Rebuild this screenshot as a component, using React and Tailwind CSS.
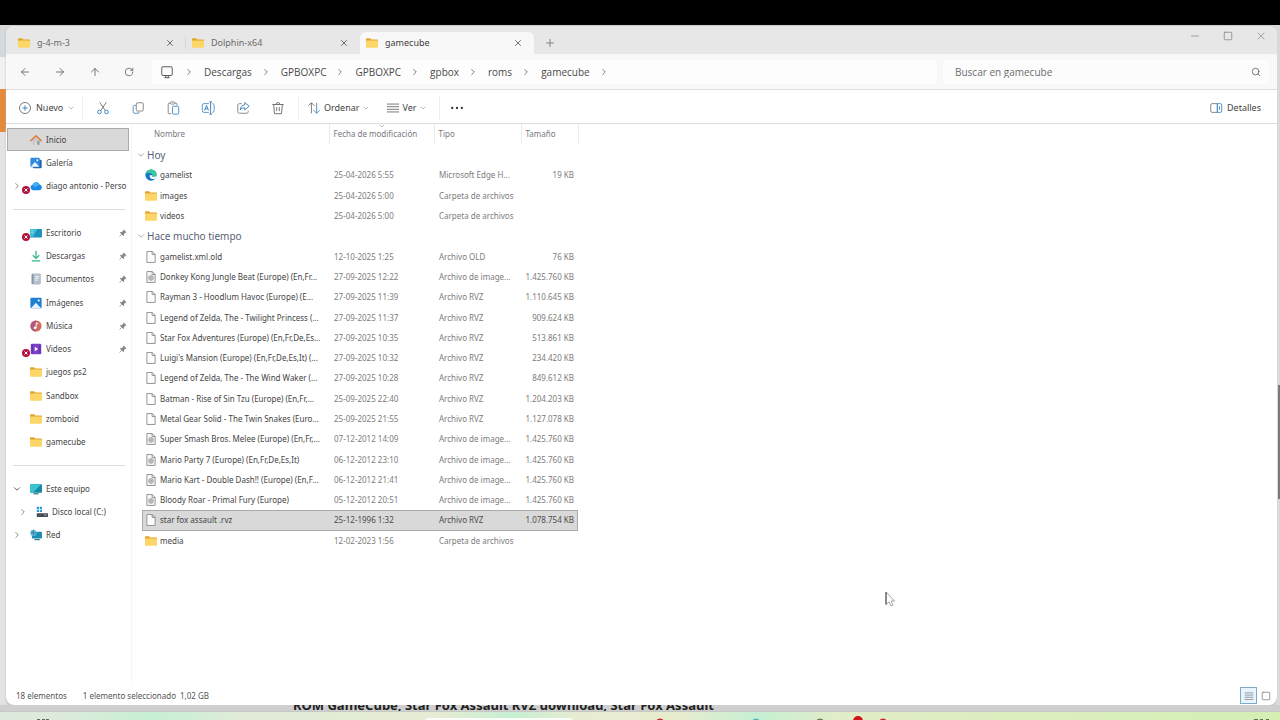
import { useState } from "react";
import clsx from "clsx";
import {
  ArrowLeft,
  ArrowRight,
  ArrowUp,
  ChevronDown,
  ChevronRight,
  Minus,
  Plus,
  RotateCw,
  Search,
  Square,
  X,
} from "lucide-react";

const tabs = [
  { id: "g4m3", label: "g-4-m-3" },
  { id: "dolphin", label: "Dolphin-x64" },
  { id: "gamecube", label: "gamecube" },
];

const crumbs = ["Descargas", "GPBOXPC", "GPBOXPC", "gpbox", "roms", "gamecube"];

const sidebarItems = [
  { id: "inicio", label: "Inicio", icon: "home" },
  { id: "galeria", label: "Galería", icon: "gallery" },
  { id: "onedrive", label: "diago antonio - Perso", icon: "cloud", expand: "right", error: true },
  { id: "sep1", separator: true },
  { id: "escritorio", label: "Escritorio", icon: "desktop", pinned: true, error: true },
  { id: "descargas", label: "Descargas", icon: "download", pinned: true },
  { id: "documentos", label: "Documentos", icon: "document", pinned: true },
  { id: "imagenes", label: "Imágenes", icon: "picture", pinned: true },
  { id: "musica", label: "Música", icon: "music", pinned: true },
  { id: "videos", label: "Videos", icon: "video", pinned: true, error: true },
  { id: "ps2", label: "juegos ps2", icon: "folder" },
  { id: "sandbox", label: "Sandbox", icon: "folder" },
  { id: "zomboid", label: "zomboid", icon: "folder" },
  { id: "gc", label: "gamecube", icon: "folder" },
  { id: "sep2", separator: true },
  { id: "equipo", label: "Este equipo", icon: "monitor", expand: "down" },
  { id: "disco", label: "Disco local (C:)", icon: "disk", expand: "right", nested: true },
  { id: "red", label: "Red", icon: "network", expand: "right" },
];

const groups = [
  {
    title: "Hoy",
    files: [
      { name: "gamelist", date: "25-04-2026 5:55", type: "Microsoft Edge H...", size: "19 KB", icon: "edge" },
      { name: "images", date: "25-04-2026 5:00", type: "Carpeta de archivos", size: "", icon: "folder" },
      { name: "videos", date: "25-04-2026 5:00", type: "Carpeta de archivos", size: "", icon: "folder" },
    ],
  },
  {
    title: "Hace mucho tiempo",
    files: [
      { name: "gamelist.xml.old", date: "12-10-2025 1:25", type: "Archivo OLD", size: "76 KB", icon: "file" },
      { name: "Donkey Kong Jungle Beat (Europe) (En,Fr...", date: "27-09-2025 12:22", type: "Archivo de image...", size: "1.425.760 KB", icon: "disc" },
      { name: "Rayman 3 - Hoodlum Havoc (Europe) (E...", date: "27-09-2025 11:39", type: "Archivo RVZ", size: "1.110.645 KB", icon: "file" },
      { name: "Legend of Zelda, The - Twilight Princess (...", date: "27-09-2025 11:37", type: "Archivo RVZ", size: "909.624 KB", icon: "file" },
      { name: "Star Fox Adventures (Europe) (En,Fr,De,Es...", date: "27-09-2025 10:35", type: "Archivo RVZ", size: "513.861 KB", icon: "file" },
      { name: "Luigi's Mansion (Europe) (En,Fr,De,Es,It) (...", date: "27-09-2025 10:32", type: "Archivo RVZ", size: "234.420 KB", icon: "file" },
      { name: "Legend of Zelda, The - The Wind Waker (...", date: "27-09-2025 10:28", type: "Archivo RVZ", size: "849.612 KB", icon: "file" },
      { name: "Batman - Rise of Sin Tzu (Europe) (En,Fr,...", date: "25-09-2025 22:40", type: "Archivo RVZ", size: "1.204.203 KB", icon: "file" },
      { name: "Metal Gear Solid - The Twin Snakes (Euro...", date: "25-09-2025 21:55", type: "Archivo RVZ", size: "1.127.078 KB", icon: "file" },
      { name: "Super Smash Bros. Melee (Europe) (En,Fr,...", date: "07-12-2012 14:09", type: "Archivo de image...", size: "1.425.760 KB", icon: "disc" },
      { name: "Mario Party 7 (Europe) (En,Fr,De,Es,It)", date: "06-12-2012 23:10", type: "Archivo de image...", size: "1.425.760 KB", icon: "disc" },
      { name: "Mario Kart - Double Dash!! (Europe) (En,F...", date: "06-12-2012 21:41", type: "Archivo de image...", size: "1.425.760 KB", icon: "disc" },
      { name: "Bloody Roar - Primal Fury (Europe)", date: "05-12-2012 20:51", type: "Archivo de image...", size: "1.425.760 KB", icon: "disc" },
      { name: "star fox assault .rvz", date: "25-12-1996 1:32", type: "Archivo RVZ", size: "1.078.754 KB", icon: "file" },
      { name: "media", date: "12-02-2023 1:56", type: "Carpeta de archivos", size: "", icon: "folder" },
    ],
  },
];

// Colored shell icons, all on a 16x16 grid
const shapes = {
  folder: (
    <>
      <path d="M0 3c0-.8.6-1.5 1.4-1.5h4l1.8 1.8h7.400c.8 0 1.400.6 1.400 1.400V8H0z" fill="#e3a52c" />
      <rect x="0" y="4.5" width="16" height="9.8" rx="1.2" fill="#fcd667" />
    </>
  ),
  home: (
    <>
      <path d="M3.2 8v6.4h3.4v-4h2.8v4h3.4V8L8 3.6z" fill="#c9c9cc" />
      <path d="M9.4 10.4v4h3.4V8z" fill="#9a9da3" />
      <path d="M1 9 8 2.4 15 9" fill="none" stroke="#e07b35" strokeWidth="2" strokeLinecap="round" strokeLinejoin="round" />
    </>
  ),
  gallery: (
    <>
      <rect x="4" y="3.5" width="11.5" height="11.5" rx="1.5" fill="#1d5fa8" />
      <rect x="0.5" y="1" width="12.5" height="12.5" rx="1.5" fill="#2f8be0" />
      <path d="m1 13 5.6-6.5L12.5 13z" fill="#e9f4ff" />
      <circle cx="9.8" cy="4.4" r="1.3" fill="#fff" />
    </>
  ),
  picture: (
    <>
      <rect x="0.5" y="1" width="15" height="14" rx="1.5" fill="#1f7fd1" />
      <path d="m1.5 14.5 6.3-7 6.7 7z" fill="#e3f2ff" />
      <circle cx="11.6" cy="4.6" r="1.4" fill="#fff" />
    </>
  ),
  cloud: (
    <>
      <path d="M4 13.5a3.6 3.6 0 0 1-.5-7.1A5 5 0 0 1 12.8 6a3.8 3.8 0 0 1-.3 7.5z" fill="#1b86e6" />
      <path d="M3.4 6.4A5 5 0 0 1 12.8 6L6.5 10z" fill="#3fb2f5" />
    </>
  ),
  desktop: (
    <>
      <rect x="0" y="2.5" width="16" height="11.5" rx="1" fill="#1b93bd" />
      <path d="M0 3.5c0-.6.4-1 1-1h9L3 14H1c-.6 0-1-.4-1-1z" fill="#43c0d8" />
      <path d="M2 5h1.5M2 7.5h1.5" stroke="#e2fbff" />
    </>
  ),
  download: (
    <path d="M8 1v10M3.6 7 8 11.3 12.4 7M2.4 14.6h11.2" fill="none" stroke="#35b888" strokeWidth="1.7" />
  ),
  document: (
    <>
      <rect x="2" y="1" width="12" height="14" rx="1.3" fill="#8795a6" />
      <rect x="4.5" y="1" width="9.5" height="14" rx="1" fill="#b3bfcb" />
      <path d="M6.5 4.5h5.5M6.5 7h5.5M6.5 9.5h3.5" stroke="#f3f7fa" strokeWidth="1.3" />
    </>
  ),
  music: (
    <>
      <circle cx="8" cy="8" r="7.4" fill="#cf6a5c" />
      <path d="M8 .6a7.4 7.4 0 0 0 0 14.8z" fill="#b4577c" />
      <path d="M8.2 10.6V3.8l3 1.4" fill="none" stroke="#fff" strokeWidth="1.3" />
      <circle cx="6.7" cy="10.6" r="1.8" fill="#fff" />
    </>
  ),
  video: (
    <>
      <rect x="1" y="1" width="14" height="14" rx="1.5" fill="#7b3fc9" />
      <path d="M3 2.5v11.5M13 2.5v11.5" stroke="#4b2292" strokeWidth="1.6" strokeDasharray="1.6 1.3" />
      <path d="m6.3 5 4.6 3-4.6 3z" fill="#fff" />
    </>
  ),
  monitor: (
    <>
      <rect x="0" y="1.5" width="16" height="11.5" rx="1" fill="#1789a8" />
      <path d="M0 2.5c0-.6.4-1 1-1h14L4 13H1c-.6 0-1-.4-1-1z" fill="#3cc3d0" />
      <path d="M4.5 14.4h7" stroke="#35718a" strokeWidth="1.6" />
    </>
  ),
  disk: (
    <>
      <path d="M1 1h3v3H1zM5 1h3v3H5zM1 5h3v3H1zM5 5h3v3H5z" fill="#2e9bdb" />
      <rect x="1" y="9.5" width="15" height="5" rx=".6" fill="#474d55" />
      <path d="M11 12h3" stroke="#d8e6ee" />
    </>
  ),
  network: (
    <>
      <rect x="2.5" y="3.5" width="13.5" height="9" rx="1" fill="#1d8fb5" />
      <path d="M6 14.2h7" stroke="#3d7d96" strokeWidth="1.5" />
      <circle cx="4.6" cy="5.2" r="4.2" fill="#68bfdf" />
      <path d="M1 5.2h7.4M4.6 1v8.4M2 2.5l5 5.2" stroke="#256f95" strokeWidth=".8" />
    </>
  ),
  edge: (
    <>
      <circle cx="8" cy="8" r="7.5" fill="#1477cc" />
      <path d="M.6 7C1.2 2.8 4.4.5 8 .5c4.5 0 7.5 3 7.5 6.5 0 2.4-1.8 3.8-3.8 3.8-1.6 0-2.6-.7-2.2-1.5C10.3 7.6 8.6 5.4 5.9 5.4 3.3 5.4 1.2 6 .6 7z" fill="#3cc7a0" />
      <path d="M6.2 8.2c-.5 3.2 2 5.6 5.4 5.2 1.2-.2 2-.6 2.7-1.2l1.2-3.4c-1.5 2-4 2.3-5.6 1.6-1-.5-.3-1-.3-2z" fill="#fff" />
    </>
  ),
  file: (
    <path d="M2.5.7h7.2l3.8 3.8v10.8h-11zM9.5.7v4h4" fill="#fdfdfd" stroke="#8b8b8b" strokeWidth="1.2" />
  ),
  disc: (
    <>
      <path d="M2.5.7h7.2l3.8 3.8v10.8h-11zM9.5.7v4h4" fill="#f7f7f7" stroke="#8b8b8b" strokeWidth="1.2" />
      <circle cx="8" cy="9.3" r="3.3" fill="#c3c6c9" stroke="#8f9396" strokeWidth=".8" />
      <circle cx="8" cy="9.3" r="1" fill="#fff" stroke="#777" strokeWidth=".6" />
    </>
  ),
};

// Outline icons of the command bar
const commands = [
  {
    id: "cut",
    label: "Cortar",
    art: (
      <>
        <path d="M4.2 1.5 10.6 11M11.8 1.5 5.4 11" stroke="#777" />
        <circle cx="4" cy="12.5" r="2.1" stroke="#3d87c4" />
        <circle cx="12" cy="12.5" r="2.1" stroke="#3d87c4" />
      </>
    ),
  },
  {
    id: "copy",
    label: "Copiar",
    art: (
      <>
        <path d="M5.5 5H4a1.5 1.5 0 0 0-1.5 1.5v6A1.5 1.5 0 0 0 4 14h4a1.5 1.5 0 0 0 1.5-1.5" stroke="#5b91bd" />
        <rect x="6" y="2" width="8" height="9.5" rx="1.5" stroke="#858585" />
      </>
    ),
  },
  {
    id: "paste",
    label: "Pegar",
    art: (
      <>
        <path d="M6 14.5H3.5a1 1 0 0 1-1-1v-10a1 1 0 0 1 1-1H5M10 2.5h1.5a1 1 0 0 1 1 1V5" stroke="#858585" />
        <rect x="5" y="1" width="5" height="2.5" rx="1" stroke="#858585" />
        <rect x="7.5" y="6" width="7" height="9" rx="1" stroke="#4b93cc" />
      </>
    ),
  },
  {
    id: "rename",
    label: "Cambiar nombre",
    art: (
      <>
        <path d="M9 3H3.5a2 2 0 0 0-2 2v6a2 2 0 0 0 2 2H9M13 3a2 2 0 0 1 2 2v6a2 2 0 0 1-2 2" stroke="#5a94c5" />
        <path d="M4 10.8 6.3 5l2.3 5.8M4.8 9h3M11 1v14M9.5 1h3M9.5 15h3" stroke="#3d80ba" />
      </>
    ),
  },
  {
    id: "share",
    label: "Compartir",
    art: (
      <>
        <path d="M6.5 3H4a2 2 0 0 0-2 2v7a2 2 0 0 0 2 2h8a2 2 0 0 0 2-2v-1" stroke="#858585" />
        <path d="M10 1.8 15 6l-5 4.2V7.8c-2.5 0-4 .7-5.2 2.5C5.2 6.8 7 4.6 10 4.3z" stroke="#3d87c4" />
      </>
    ),
  },
  {
    id: "delete",
    label: "Eliminar",
    art: (
      <path d="M1.5 4h13M5.8 4a2.2 2.2 0 0 1 4.4 0M3 4l1 10.5h8L13 4M6.500 7v4.500M9.500 7v4.500" stroke="#707070" />
    ),
  },
];

function ShellIcon({ name, className = "size-3" }) {
  return (
    <svg viewBox="0 0 16 16" className={clsx("shrink-0", className)} aria-hidden="true">
      {shapes[name]}
    </svg>
  );
}

function LineIcon({ children, className = "size-3.5" }) {
  return (
    <svg viewBox="0 0 16 16" fill="none" strokeWidth="1.1" className={clsx("shrink-0", className)} aria-hidden="true">
      {children}
    </svg>
  );
}

function PinIcon() {
  return (
    <svg viewBox="0 0 16 16" className="size-2 shrink-0" aria-hidden="true">
      <path d="m9.5 1 5.5 5.5-1.5 1h-1l-2.5 3V13l-1.5 1L2 7.5 3 6h2.5l3-2.5V2z" fill="#858a90" />
      <path d="M5.5 10.5 1 15" stroke="#858a90" strokeWidth="1.6" />
    </svg>
  );
}

function ErrorBadge() {
  return (
    <svg viewBox="0 0 16 16" className="absolute -bottom-0.5 -left-2 size-2" aria-hidden="true">
      <circle cx="8" cy="8" r="8" fill="#b3123a" />
      <path d="m5 5 6 6M11 5l-6 6" stroke="#fff" strokeWidth="2" />
    </svg>
  );
}

function TabBar({ active, onSelect }) {
  return (
    <div className="flex h-7 items-stretch bg-[#e7e7e7] pl-1.5">
      {tabs.map((tab, i) => (
        <div
          key={tab.id}
          className={clsx(
            "mt-1.5 flex w-[174px] items-center rounded-t-md pl-1.5 text-[9px]",
            tab.id === active ? "bg-[#f8f8f8] text-[#404040]" : "text-[#6a6a6a]"
          )}
        >
          <button onClick={() => onSelect(tab.id)} className="flex flex-1 items-center gap-[7px] text-left">
            <ShellIcon name="folder" />
            <span>{tab.label}</span>
          </button>
          <button aria-label={`Cerrar ${tab.label}`} className="flex">
            <X className="size-2.5 text-[#555]" strokeWidth={2} />
          </button>
          <span className={clsx("ml-2.5 h-3 w-px shrink-0", i === 0 && "bg-[#d5d5d5]")} />
        </div>
      ))}
      <button aria-label="Nueva pestaña" className="mt-1.5 ml-2.5 flex items-center">
        <Plus className="size-3 text-[#666]" strokeWidth={1.5} />
      </button>
      <div className="ml-auto flex items-center gap-[22px] pr-2.5 pb-2 text-[#8a8a8a]">
        <button aria-label="Minimizar">
          <Minus className="size-3" strokeWidth={1.5} />
        </button>
        <button aria-label="Maximizar">
          <Square className="size-2.5" strokeWidth={2} />
        </button>
        <button aria-label="Cerrar">
          <X className="size-3" strokeWidth={1.5} />
        </button>
      </div>
    </div>
  );
}

function AddressBar() {
  return (
    <div className="flex h-9 items-center border-b border-[#dedede] bg-[#f8f8f8] pr-2 font-['Open_Sans','Noto_Sans',sans-serif] text-[#666]">
      <div className="flex w-[146px] items-center gap-[23px] pl-[13px]">
        <button aria-label="Atrás"><ArrowLeft className="size-3" strokeWidth={1.8} /></button>
        <button aria-label="Adelante"><ArrowRight className="size-3" strokeWidth={1.8} /></button>
        <button aria-label="Arriba"><ArrowUp className="size-3" strokeWidth={1.8} /></button>
        <button aria-label="Actualizar"><RotateCw className="size-2.5" strokeWidth={2} /></button>
      </div>
      <nav aria-label="Ruta" className="flex h-6 flex-1 items-center rounded bg-[#fdfdfd] pl-2 text-[10px] text-[#4a4a4a]">
        <LineIcon>
          <path d="M3.5 2h9A1.5 1.5 0 0 1 14 3.5v7a1.5 1.5 0 0 1-1.5 1.5h-9A1.5 1.5 0 0 1 2 10.5v-7A1.5 1.5 0 0 1 3.5 2zM5 14.5h6M6.5 12v2.5M9.5 12v2.5" stroke="#555" />
        </LineIcon>
        <ChevronRight className="mx-2.5 size-2.5 text-[#666]" />
        {crumbs.map((crumb, i) => (
          <div key={i} className="flex items-center">
            <button>{crumb}</button>
            <ChevronRight className="mr-2.5 ml-[9px] size-2.5 text-[#666]" />
          </div>
        ))}
      </nav>
      <label className="ml-1.5 flex h-6 w-[326px] items-center rounded bg-[#fcfcfc] pr-2 pl-3">
        <input
          type="text"
          aria-label="Buscar"
          placeholder="Buscar en gamecube"
          className="min-w-0 flex-1 bg-transparent text-[10px] outline-none placeholder:text-[#6c6c6c]"
        />
        <Search className="size-2.5" strokeWidth={2} />
      </label>
    </div>
  );
}

function CommandBar() {
  return (
    <div className="flex h-[34px] items-center border-b border-[#dedede] pt-0.5 pr-4 pl-3 text-[9px] text-[#3f3f3f]">
      <button className="flex w-[54px] items-center">
        <LineIcon>
          <circle cx="8" cy="8" r="6.3" stroke="#777" />
          <path d="M8 5v6M5 8h6" stroke="#3a84c0" />
        </LineIcon>
        <span className="mr-1 ml-1">Nuevo</span>
        <ChevronDown className="size-2 shrink-0 text-[#999]" />
      </button>
      <div className="ml-2.5 h-6 w-px bg-[#eeeeee]" />
      <div className="flex gap-[21px] px-[13px]">
        {commands.map((cmd) => (
          <button key={cmd.id} aria-label={cmd.label}>
            <LineIcon>{cmd.art}</LineIcon>
          </button>
        ))}
      </div>
      <div className="h-6 w-px bg-[#eeeeee]" />
      <button className="ml-2 flex items-center">
        <LineIcon>
          <path d="M5 14V2M1.5 5.5 5 2l3.5 3.5" stroke="#777" />
          <path d="M11 2v12M7.5 10.5 11 14l3.5-3.5" stroke="#5b91bd" />
        </LineIcon>
        <span className="mr-0.5 ml-[3px]">Ordenar</span>
        <ChevronDown className="size-2 text-[#999]" />
      </button>
      <button className="ml-4 flex items-center">
        <LineIcon>
          <path d="M1 3.5h14M1 6.5h14M1 9.5h14M1 12.5h14" stroke="#777" />
        </LineIcon>
        <span className="mr-0.5 ml-[3px]">Ver</span>
        <ChevronDown className="size-2 text-[#999]" />
      </button>
      <div className="ml-3 h-6 w-px bg-[#eeeeee]" />
      <button aria-label="Ver más" className="ml-2.5">
        <svg viewBox="0 0 16 16" className="size-3.5">
          <g fill="#333">
            <circle cx="2.5" cy="8" r="1.3" />
            <circle cx="8" cy="8" r="1.3" />
            <circle cx="13.5" cy="8" r="1.3" />
          </g>
        </svg>
      </button>
      <button className="ml-auto flex items-center gap-1">
        <LineIcon>
          <path d="M9.5 3h-6A1.5 1.5 0 0 0 2 4.5v7A1.5 1.5 0 0 0 3.5 13h6z" stroke="#858585" />
          <path d="M9.5 3H13a1.5 1.5 0 0 1 1.5 1.5v7A1.5 1.5 0 0 1 13 13H9.5zM12 6v4" stroke="#4b93cc" />
        </LineIcon>
        Detalles
      </button>
    </div>
  );
}

function Sidebar({ active, onSelect }) {
  return (
    <nav aria-label="Panel de navegación" className="w-[126px] shrink-0 border-r border-[#f6f6f6] pt-1 pr-0.5 pl-px">
      <ul className="grid h-[419px] auto-rows-fr">
        {sidebarItems.map((item) =>
          item.separator ? (
            <li key={item.id} className="flex items-center pr-1 pl-1.5">
              <hr className="w-full border-[#dcdcdc]" />
            </li>
          ) : (
            <li
              key={item.id}
              className={clsx(
                "flex min-w-0 items-center border",
                item.id === active ? "border-[#a9a9a9] bg-[#d9d9d9]" : "border-transparent"
              )}
            >
              <button
                aria-label={`Expandir ${item.label}`}
                className={clsx("flex w-[22px] shrink-0 justify-start pl-1", item.nested && "ml-1.5", !item.expand && "invisible")}
              >
                {item.expand === "down" ? (
                  <ChevronDown className="size-2.5 text-[#444]" />
                ) : (
                  <ChevronRight className="size-2.5 text-[#777]" />
                )}
              </button>
              <a
                href={`#${item.id}`}
                onClick={() => onSelect(item.id)}
                className="flex min-w-0 flex-1 items-center gap-1 whitespace-nowrap text-[#444]"
              >
                <span className="relative flex shrink-0">
                  <ShellIcon name={item.icon} />
                  {item.error && <ErrorBadge />}
                </span>
                <span>{item.label}</span>
              </a>
              {item.pinned && (
                <span className="pr-px">
                  <PinIcon />
                </span>
              )}
            </li>
          )
        )}
      </ul>
    </nav>
  );
}

function FileList({ selected, onSelect }) {
  return (
    <table className="ml-2.5 h-[427px] w-[436px] table-fixed border-collapse text-left whitespace-nowrap">
      <colgroup>
        <col className="w-[187px]" />
        <col className="w-[105px]" />
        <col className="w-[87px]" />
        <col className="w-[57px]" />
      </colgroup>
      <thead>
        <tr className="h-[21px] text-[#76797f]">
          <th className="border-r border-[#ececec] pb-0.5 pl-3 font-normal">Nombre</th>
          <th className="relative border-r border-[#ececec] pb-0.5 pl-1 font-normal">
            Fecha de modificación
            <ChevronDown className="absolute -top-0.5 left-12 size-2 text-[#999]" />
          </th>
          <th className="border-r border-[#ececec] pb-0.5 pl-1 font-normal">Tipo</th>
          <th className="border-r border-[#ececec] pb-0.5 pl-1 font-normal">Tamaño</th>
        </tr>
      </thead>
      {groups.map((group) => (
        <tbody key={group.title}>
          <tr className="h-5">
            <th colSpan={4} className="p-0 text-[10px] leading-4 font-normal text-[#5a5f78]">
              <button className="-ml-1.5 flex items-center gap-px">
                <ChevronDown className="size-2.5 text-[#777]" strokeWidth={1.5} />
                {group.title}
              </button>
            </th>
          </tr>
          {group.files.map((file) => {
            const isSelected = file.name === selected;
            return (
              <tr
                key={file.name}
                onClick={() => onSelect(file.name)}
                className={clsx(
                  "h-5",
                  isSelected
                    ? "bg-[#d9d9d9] text-[#4c4c4c] outline outline-1 -outline-offset-1 outline-[#a9a9a9]"
                    : "text-[#7c7c7c]"
                )}
              >
                <td className="p-0 pl-[3px]">
                  <div className="flex items-center gap-[3px] text-[#444]">
                    <ShellIcon name={file.icon} />
                    {file.name}
                  </div>
                </td>
                <td className="p-0 pl-[5px]">{file.date}</td>
                <td className="p-0 pl-[5px]">{file.type}</td>
                <td className="p-0 pr-1 text-right">{file.size}</td>
              </tr>
            );
          })}
        </tbody>
      ))}
    </table>
  );
}

function StatusBar() {
  return (
    <footer className="flex h-[19px] items-center pr-1.5 pl-2.5 text-[#555]">
      <span className="mr-4">18 elementos</span>
      <span className="mr-1">1 elemento seleccionado</span>
      <span>1,02 GB</span>
      <div className="ml-auto flex items-center gap-1">
        <button aria-label="Detalles" className="flex size-[17px] items-center justify-center border border-[#7fa9c6] bg-[#e9f4fb]">
          <LineIcon className="size-2.5">
            <path d="M1 3h14M1 6.5h14M1 10h14M1 13.5h14" stroke="#66788a" />
          </LineIcon>
        </button>
        <button aria-label="Iconos grandes" className="flex">
          <Square className="size-2.5 text-[#888]" />
        </button>
      </div>
    </footer>
  );
}

function Taskbar() {
  return (
    <div className="h-[9px] overflow-hidden border-t border-[#c4c9c2] bg-linear-to-r from-[#dcebdd] via-[#e9ecd0] to-[#d3efb4]">
      <svg viewBox="0 0 1280 8" preserveAspectRatio="none" className="h-2 w-full" aria-hidden="true">
        <defs>
          <linearGradient id="glow">
            <stop offset="0" stopColor="#c6efd3" stopOpacity="0" />
            <stop offset=".5" stopColor="#c6efd3" />
            <stop offset="1" stopColor="#c6efd3" stopOpacity="0" />
          </linearGradient>
        </defs>
        <rect x="60" width="180" height="8" fill="url(#glow)" />
        <rect x="440" width="140" height="8" fill="url(#glow)" />
        <rect x="680" width="160" height="8" fill="url(#glow)" />
        <rect x="425" y="6" width="148" height="6" rx="3" fill="#fbfdf8" />
        <circle cx="660" cy="10.5" r="4" fill="#c8262b" />
        <circle cx="756" cy="10.5" r="4" fill="#49b9bd" />
        <circle cx="820" cy="10.5" r="4" fill="#6f7a58" />
        <circle cx="858" cy="9" r="5" fill="#d3121c" />
        <circle cx="883" cy="10.5" r="4" fill="#c8262b" />
        <path d="M37 7.5h3M42 7.5h3M46 7.5h3M1254 7.5h4M1260 7.5h3M1266 7.5h3" stroke="#5f6b60" />
      </svg>
    </div>
  );
}

export default function App() {
  const [activeTab, setActiveTab] = useState("gamecube");
  const [activePlace, setActivePlace] = useState("inicio");
  const [selectedFile, setSelectedFile] = useState("star fox assault .rvz");

  return (
    <div className="relative flex h-screen w-full flex-col overflow-hidden bg-[#dcdcdc] font-['Noto_Sans','Open_Sans',sans-serif] text-[8px] leading-3">
      <div className="h-[25px] shrink-0 bg-black" />

      <div className="flex min-h-0 flex-1">
        {/* Page behind the window, left edge */}
        <div className="flex w-1.5 shrink-0 flex-col">
          <div className="h-8 bg-[#d5d9dc]" />
          <div className="h-8 bg-[#f1f1f1]" />
          <div className="h-[43px] bg-[#e48a3c]" />
          <div className="flex-1 bg-[#e3e3e3]" />
        </div>

        {/* Explorer window */}
        <main className="flex min-w-0 flex-1 flex-col overflow-hidden rounded-lg border-t border-[#c9c9c9] bg-white shadow-[0_1px_2px_0_#b5b5b5]">
          <TabBar active={activeTab} onSelect={setActiveTab} />
          <AddressBar />
          <CommandBar />
          <div className="flex min-h-0 flex-1">
            <Sidebar active={activePlace} onSelect={setActivePlace} />
            <FileList selected={selectedFile} onSelect={setSelectedFile} />
          </div>
          <StatusBar />
        </main>

        {/* Scrollbar of the page behind */}
        <div className="flex w-[3px] shrink-0 flex-col bg-[#d9d9d9] pt-[360px]">
          <div className="ml-px h-[114px] bg-[#7a7a7a]" />
        </div>
      </div>

      <div className="flex h-1.5 shrink-0 items-end overflow-hidden bg-[#cfcfcf] pl-[293px]">
        <p className="text-[13px] leading-3 font-bold whitespace-nowrap text-[#222]">
          ROM GameCube, Star Fox Assault RVZ download, Star Fox Assault
        </p>
      </div>
      <Taskbar />

      {/* Mouse pointer */}
      <svg viewBox="0 0 10 16" className="absolute top-[591px] left-[885px] h-4 w-2.5" aria-hidden="true">
        <path d="M1 1v12.5l3-2.7L6 15l2-1-1.9-4h3.4z" fill="#fff" stroke="#999" strokeWidth=".9" />
        <path d="M1 1v12.5" stroke="#444" />
      </svg>
    </div>
  );
}
